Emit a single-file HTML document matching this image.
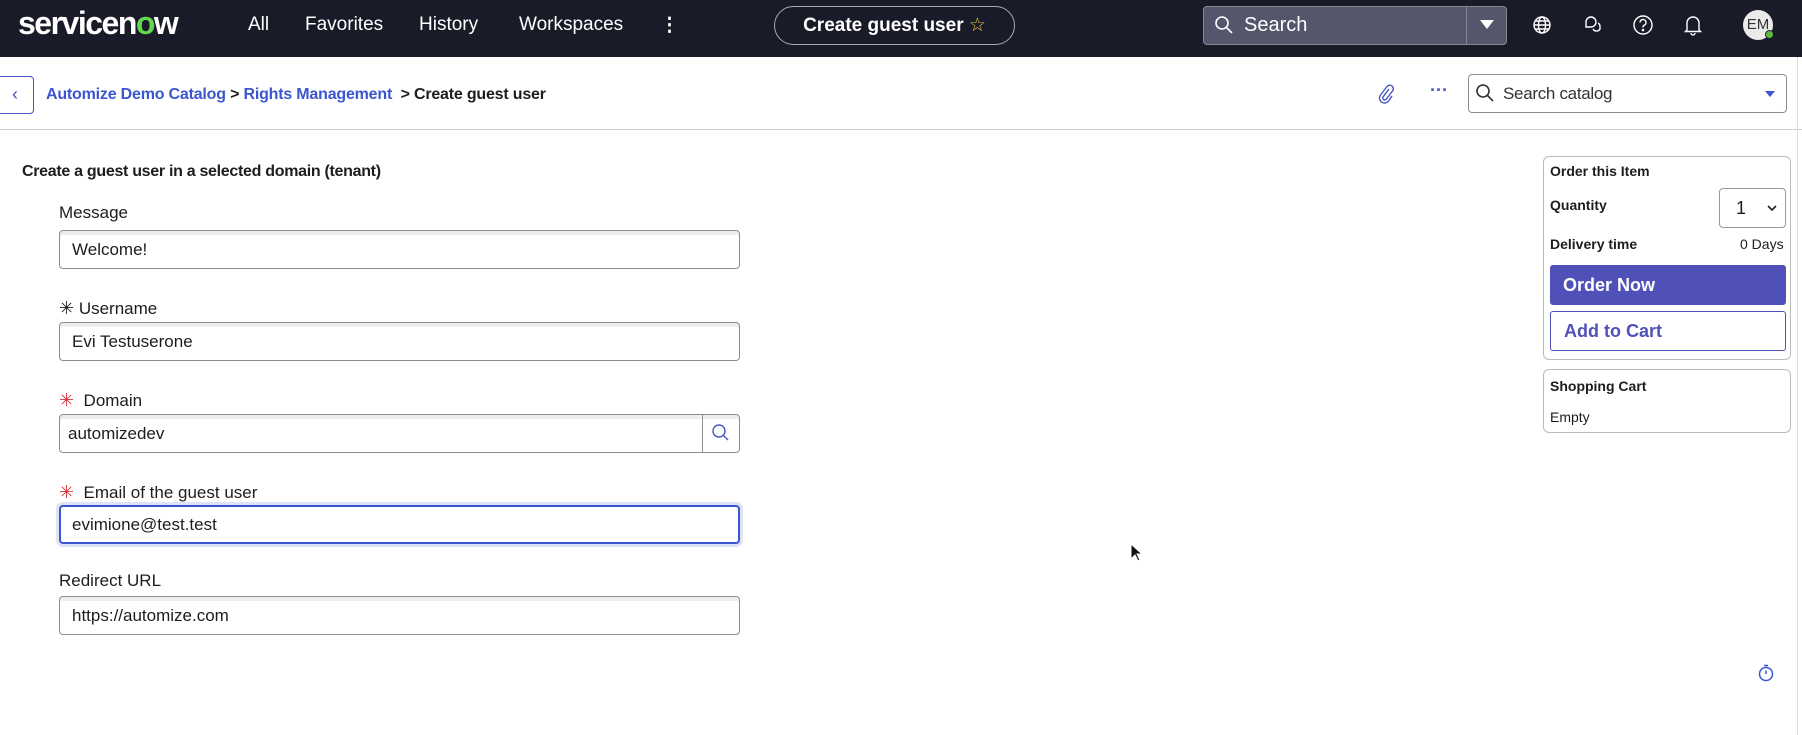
<!DOCTYPE html>
<html><head><meta charset="utf-8"><style>
*{box-sizing:border-box;margin:0;padding:0}
body{width:1802px;height:735px;position:relative;overflow:hidden;background:#fff;font-family:"Liberation Sans",sans-serif;color:#1d1d1d}
.a{position:absolute}
.hdr{left:0;top:0;width:1802px;height:57px;background:#1a1b29}
.nav{color:#fff;font-size:19px;top:14px}
.lbl{font-size:17px;left:59px;color:#1d1d1d}
.inp{left:59px;width:681px;height:39px;border:1px solid #8a8d95;border-radius:4px;font-size:17px;padding:9px 12px;box-shadow:inset 0 4px 0 #eee}
</style></head><body>
<div class="a hdr"></div>
<div class="a" style="left:18px;top:5px;color:#fff;font-size:32px;font-weight:bold;letter-spacing:-1.5px">servicen<span style="color:#62d84e">o</span>w</div>
<div class="a nav" style="left:248px">All</div>
<div class="a nav" style="left:305px">Favorites</div>
<div class="a nav" style="left:419px">History</div>
<div class="a nav" style="left:519px">Workspaces</div>
<div class="a nav" style="left:660px;font-weight:bold">⋮</div>
<div class="a" style="left:774px;top:6px;width:241px;height:39px;border:1px solid #aaa;border-radius:20px;color:#fff;font-size:19px;font-weight:bold;text-align:center;line-height:37px">Create guest user <span style="color:#e8c34a;font-weight:normal">☆</span></div>
<div class="a" style="left:1203px;top:6px;width:304px;height:39px;background:#55566b;border:1px solid #888;border-radius:4px"></div>
<div class="a" style="left:1466px;top:6px;width:1px;height:39px;background:#888"></div>
<svg class="a" style="left:1214px;top:15px" width="20" height="20" viewBox="0 0 20 20"><circle cx="8" cy="8" r="6" fill="none" stroke="#fff" stroke-width="1.6"/><path d="M12.5 12.5 L18 18" stroke="#fff" stroke-width="1.6"/></svg>
<div class="a" style="left:1244px;top:14px;color:#fff;font-size:20px">Search</div>
<div class="a" style="left:1480px;top:20px;width:0;height:0;border-left:7px solid transparent;border-right:7px solid transparent;border-top:9px solid #fff"></div>
<svg class="a" style="left:1532px;top:15px" width="20" height="20" viewBox="0 0 20 20" fill="none" stroke="#fff" stroke-width="1.4"><circle cx="10" cy="10" r="8"/><ellipse cx="10" cy="10" rx="3.5" ry="8"/><path d="M2 10h16M3.5 6h13M3.5 14h13"/></svg>
<svg class="a" style="left:1583px;top:15px" width="20" height="20" viewBox="0 0 20 20" fill="none" stroke="#fff" stroke-width="1.4"><path d="M3 12V7a5 5 0 0 1 10 0 5 5 0 0 1-5 5z"/><path d="M10 14a4 4 0 0 0 7 0V11a4 4 0 0 0-2-3"/></svg>
<svg class="a" style="left:1632px;top:14px" width="22" height="22" viewBox="0 0 22 22" fill="none" stroke="#fff" stroke-width="1.4"><circle cx="11" cy="11" r="9"/><path d="M8 8.5a3 3 0 1 1 4 2.8c-1 .4-1 1-1 2.2"/><circle cx="11" cy="16" r=".6" fill="#fff"/></svg>
<svg class="a" style="left:1683px;top:14px" width="20" height="22" viewBox="0 0 20 22" fill="none" stroke="#fff" stroke-width="1.4"><path d="M4 16V9a6 6 0 0 1 12 0v7l1.5 1.5h-15z"/><path d="M8 19a2 2 0 0 0 4 0"/></svg>
<div class="a" style="left:1743px;top:10px;width:30px;height:30px;border-radius:50%;background:#eaeaea;color:#333;font-size:15px;text-align:center;line-height:30px">EM</div>
<div class="a" style="left:1765px;top:30px;width:9px;height:9px;border-radius:50%;background:#5dbb3c;border:1px solid #1a1b29"></div>

<div class="a" style="left:-4px;top:76px;width:38px;height:38px;border:1px solid #4a57c0;border-radius:4px;color:#4a57c0;font-size:18px;text-align:center;line-height:34px">‹</div>
<div class="a" style="left:46px;top:86px;font-size:16px;font-weight:bold;letter-spacing:-0.2px"><span style="color:#3c55d0">Automize Demo Catalog</span> &gt; <span style="color:#3c55d0">Rights Management</span>&nbsp; &gt; Create guest user</div>
<svg class="a" style="left:1378px;top:84px" width="16" height="20" viewBox="0 0 16 20" fill="none" stroke="#4a57c0" stroke-width="1.4"><path d="M11 5l-6 8a2 2 0 0 0 3 2.5l6.5-8.5a3.5 3.5 0 0 0-5.5-4.5L2.5 11a5 5 0 0 0 8 6L14 12"/></svg>
<div class="a" style="left:1430px;top:80px;color:#4a57c0;font-size:18px;font-weight:bold">···</div>
<div class="a" style="left:1468px;top:74px;width:319px;height:39px;border:1px solid #8a8d95;border-radius:4px"></div>
<svg class="a" style="left:1475px;top:83px" width="20" height="20" viewBox="0 0 20 20"><circle cx="8" cy="8" r="6" fill="none" stroke="#333" stroke-width="1.6"/><path d="M12.5 12.5 L18 18" stroke="#333" stroke-width="1.6"/></svg>
<div class="a" style="left:1503px;top:84px;font-size:17px;color:#333;letter-spacing:-0.3px">Search catalog</div>
<div class="a" style="left:1765px;top:91px;border-left:5px solid transparent;border-right:5px solid transparent;border-top:6px solid #3c55d0"></div>
<div class="a" style="left:0;top:129px;width:1802px;height:1px;background:#ccc"></div>

<div class="a" style="left:22px;top:163px;font-size:16px;font-weight:bold;letter-spacing:-0.3px">Create a guest user in a selected domain (tenant)</div>
<div class="a lbl" style="top:203px">Message</div>
<div class="a inp" style="top:230px">Welcome!</div>
<div class="a lbl" style="top:298px"><span style="font-size:18px">✳</span> Username</div>
<div class="a inp" style="top:322px">Evi Testuserone</div>
<div class="a lbl" style="top:390px"><span style="color:#d6303b;font-size:18px">✳</span>&nbsp; Domain</div>
<div class="a inp" style="top:414px;padding-left:8px">automizedev</div>
<div class="a" style="left:702px;top:414px;width:38px;height:39px;border-left:1px solid #8a8d95"></div>
<svg class="a" style="left:711px;top:423px" width="20" height="20" viewBox="0 0 20 20"><circle cx="8" cy="8" r="6" fill="none" stroke="#4a57c0" stroke-width="1.4"/><path d="M12.5 12.5 L17 17" stroke="#4a57c0" stroke-width="1.4"/></svg>
<div class="a lbl" style="top:482px"><span style="color:#d6303b;font-size:18px">✳</span>&nbsp; Email of the guest user</div>
<div class="a inp" style="top:505px;border:2px solid #3c55d0;box-shadow:0 0 0 3px #dfe3f7;padding-top:8px;padding-left:11px">evimione@test.test</div>
<div class="a lbl" style="top:571px">Redirect URL</div>
<div class="a inp" style="top:596px">https://automize.com</div>

<div class="a" style="left:1543px;top:156px;width:248px;height:204px;border:1px solid #bbb;border-radius:6px"></div>
<div class="a" style="left:1550px;top:163px;font-size:14px;font-weight:bold">Order this Item</div>
<div class="a" style="left:1550px;top:197px;font-size:14px;font-weight:bold">Quantity</div>
<div class="a" style="left:1719px;top:188px;width:67px;height:40px;border:1px solid #999;border-radius:4px;font-size:18px;padding:9px 16px">1</div>
<svg class="a" style="left:1766px;top:203px" width="12" height="10" viewBox="0 0 12 10" fill="none" stroke="#222" stroke-width="1.6"><path d="M2 3l4 4 4-4"/></svg>
<div class="a" style="left:1550px;top:236px;font-size:14px;font-weight:bold">Delivery time</div>
<div class="a" style="left:1740px;top:236px;font-size:14px">0 Days</div>
<div class="a" style="left:1550px;top:265px;width:236px;height:40px;background:#4f51b8;border-radius:3px;color:#fff;font-size:18px;font-weight:bold;padding:10px 13px">Order Now</div>
<div class="a" style="left:1550px;top:311px;width:236px;height:40px;border:1px solid #4f51b8;border-radius:3px;color:#4f51b8;font-size:18px;font-weight:bold;padding:9px 13px">Add to Cart</div>
<div class="a" style="left:1543px;top:369px;width:248px;height:64px;border:1px solid #bbb;border-radius:6px"></div>
<div class="a" style="left:1550px;top:378px;font-size:14px;font-weight:bold">Shopping Cart</div>
<div class="a" style="left:1550px;top:409px;font-size:14px">Empty</div>
<div class="a" style="left:1797px;top:57px;width:1px;height:678px;background:#ddd"></div>
<svg class="a" style="left:1757px;top:664px" width="18" height="18" viewBox="0 0 18 18" fill="none" stroke="#3c55d0" stroke-width="1.5"><circle cx="9" cy="10" r="6.5"/><path d="M9 6.5V10M7 1.5h4"/></svg>
<svg class="a" style="left:1130px;top:543px" width="14" height="20" viewBox="0 0 14 20"><path d="M1 1v15l4-4 3 6 2-1-3-6h5z" fill="#111" stroke="#fff"/></svg>
</body></html>
